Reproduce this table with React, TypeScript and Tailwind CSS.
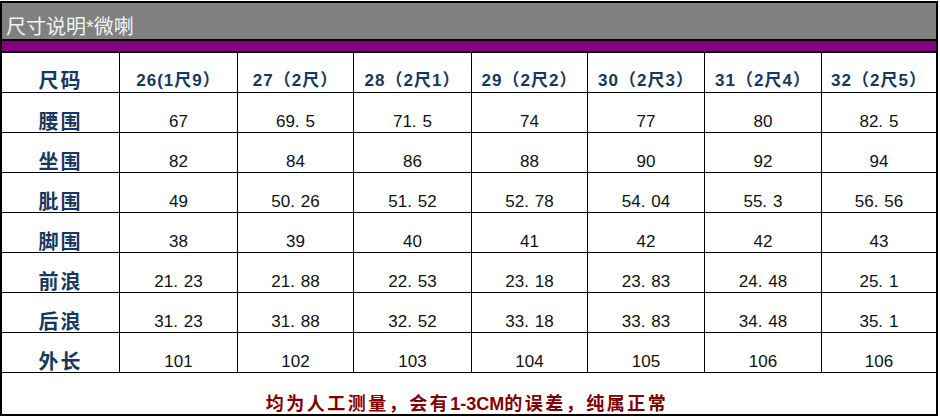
import React from 'react';

const sizes = ['26(1尺9）', '27（2尺）', '28（2尺1）', '29（2尺2）', '30（2尺3）', '31（2尺4）', '32（2尺5）'];

const rows: { label: string; values: string[] }[] = [
  { label: '腰围', values: ['67', '69.5', '71.5', '74', '77', '80', '82.5'] },
  { label: '坐围', values: ['82', '84', '86', '88', '90', '92', '94'] },
  { label: '肶围', values: ['49', '50.26', '51.52', '52.78', '54.04', '55.3', '56.56'] },
  { label: '脚围', values: ['38', '39', '40', '41', '42', '42', '43'] },
  { label: '前浪', values: ['21.23', '21.88', '22.53', '23.18', '23.83', '24.48', '25.1'] },
  { label: '后浪', values: ['31.23', '31.88', '32.52', '33.18', '33.83', '34.48', '35.1'] },
  { label: '外长', values: ['101', '102', '103', '104', '105', '106', '106'] },
];

const cjk = { fontFamily: '"Liberation Sans", "Noto Sans CJK SC", sans-serif' };

const grid = 'grid grid-cols-[118px_118px_116px_118px_116px_117px_117px_1fr]';

// the sheet's font draws the decimal point wide, so pad it a little
function Num({ v }: { v: string }) {
  const [a, b] = v.split('.');
  return (
    <span>
      {a}
      {b !== undefined && (
        <>
          <span className="mr-[6px]">.</span>
          {b}
        </>
      )}
    </span>
  );
}

export default function App() {
  return (
    <div className="w-[940px] h-[419px] bg-white pt-[1px]">
      <div className="w-[938px] border-2 border-black">
        {/* title bar */}
        <div
          className="h-[38px] bg-[#808080] border-b-2 border-black flex items-end pb-[2px] pl-[4px] text-[20px] leading-none text-[#f2f2f2]"
          style={cjk}
        >
          尺寸说明*微喇
        </div>
        <div className="h-[12px] bg-[#800080] border-b-2 border-black" />

        {/* header */}
        <div className={`${grid} h-[40px] border-b border-black`}>
          <div className="border-r border-black flex items-end justify-center pb-[1px] text-[20px] font-bold leading-none text-[#17375e] tracking-[2px]" style={cjk}>
            尺码
          </div>
          {sizes.map((s, i) => (
            <div
              key={s}
              className={`flex items-end justify-center pb-[3px] text-[17px] font-bold leading-none text-[#17375e] tracking-[1px] ${i < 6 ? 'border-r border-black' : ''}`}
              style={cjk}
            >
              {s}
            </div>
          ))}
        </div>

        {rows.map((r) => (
          <div key={r.label} className={`${grid} h-[40px] border-b border-black`}>
            <div className="border-r border-black flex items-end justify-center pb-0 text-[20px] font-bold leading-none text-[#17375e] tracking-[2px]" style={cjk}>
              {r.label}
            </div>
            {r.values.map((v, i) => (
              <div
                key={i}
                className={`flex items-end justify-center pb-[2px] text-[17px] leading-none text-[#111] ${i < 6 ? 'border-r border-black' : ''}`}
                style={cjk}
              >
                <Num v={v} />
              </div>
            ))}
          </div>
        ))}

        {/* footer note */}
        <div className="h-[41px] flex items-end justify-center pb-[1px] pr-[4px] text-[18px] font-bold leading-none text-[#800000]" style={cjk}>
          <span className="tracking-[2.5px]">均为人工测量，会有</span>
          <span>1-3CM</span>
          <span className="tracking-[2.5px]">的误差，纯属正常</span>
        </div>
      </div>
    </div>
  );
}
